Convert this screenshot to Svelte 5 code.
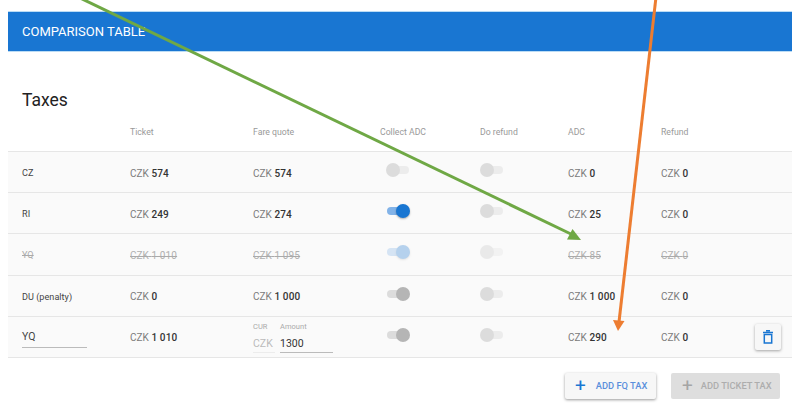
<script>
    const rows = [
        { code: "CZ", ticket: "574", fare: "574", collect: "off", refund: "off", adc: "0", ref: "0" },
        { code: "RI", ticket: "249", fare: "274", collect: "on", refund: "off", adc: "25", ref: "0" },
        { code: "YQ", ticket: "1 010", fare: "1 095", collect: "on", refund: "off", adc: "85", ref: "0", struck: true },
        { code: "DU (penalty)", ticket: "0", fare: "1 000", collect: "dark", refund: "off", adc: "1 000", ref: "0" },
        { code: "YQ", ticket: "1 010", collect: "dark", refund: "off", adc: "290", ref: "0", custom: true }
    ];
</script>

<main class="page">
    <header class="bar">COMPARISON TABLE</header>
    <h2>Taxes</h2>

    <div class="row head">
        <span></span>
        <span>Ticket</span>
        <span>Fare quote</span>
        <span>Collect ADC</span>
        <span>Do refund</span>
        <span>ADC</span>
        <span>Refund</span>
    </div>

    <div class="rows">
        {#each rows as r}
            <div class="row body" class:struck={r.struck}>
                {#if r.custom}
                    <span class="code-input">{r.code}</span>
                {:else}
                    <span class="code">{r.code}</span>
                {/if}
                <span class="money"><i>CZK</i> <b>{r.ticket}</b></span>
                {#if r.custom}
                    <div class="fq">
                        <div class="fq-field cur"><small>CUR</small><span>CZK</span></div>
                        <div class="fq-field amt"><small>Amount</small><span>1300</span></div>
                    </div>
                {:else}
                    <span class="money"><i>CZK</i> <b>{r.fare}</b></span>
                {/if}
                <div class="toggle {r.collect}"><em></em><u></u></div>
                <div class="toggle {r.refund} second"><em></em><u></u></div>
                <span class="money"><i>CZK</i> <b>{r.adc}</b></span>
                <span class="money"><i>CZK</i> <b>{r.ref}</b></span>
                {#if r.custom}
                    <button class="trash" aria-label="Delete">
                        <svg width="10" height="14" viewBox="0 0 10 14">
                            <path d="M3 .8h4M0 2.500h10" stroke="#1976d2" stroke-width="1.500" fill="none" />
                            <path d="M1.300 4.600h7.400v8.500H1.300z" stroke="#1976d2" stroke-width="1.500" fill="none" />
                        </svg>
                    </button>
                {/if}
            </div>
        {/each}
    </div>

    <div class="actions">
        <button class="btn primary"><span class="plus">+</span>ADD FQ TAX</button>
        <button class="btn disabled"><span class="plus">+</span>ADD TICKET TAX</button>
    </div>

    <svg class="arrows" width="792" height="407" viewBox="0 0 792 407">
        <line x1="78" y1="-3" x2="573" y2="235" stroke="#6fa845" stroke-width="3" />
        <polygon points="581,240 567,239.500 572.500,229" fill="#6fa845" />
        <line x1="656" y1="-3" x2="619" y2="322" stroke="#ed7d31" stroke-width="3" />
        <polygon points="618,331 613,320 624.500,321" fill="#ed7d31" />
    </svg>
</main>

<style>
    :global(body) {
        margin: 0;
        background: #fff;
    }

    .page {
        position: relative;
        width: 792px;
        height: 407px;
        overflow: hidden;
        padding: 12px 0 0 8px;
        box-sizing: border-box;
        font-family: Roboto, "Liberation Sans", sans-serif;
        color: #333;
    }

    .bar {
        height: 39px;
        line-height: 40px;
        padding-left: 14px;
        background: #1976d2;
        border-top: 1px solid #bbdcf5;
        border-bottom: 1px solid #bbdcf5;
        margin-top: -1px;
        color: #fff;
        font-size: 13px;
        font-weight: 400;
    }

    h2 {
        margin: 37px 0 0;
        padding-left: 14px;
        height: 22px;
        line-height: 22px;
        font-size: 17.500px;
        font-weight: 400;
        color: #222;
    }

    .row {
        display: grid;
        grid-template-columns: 122px 123px 127px 100px 88px 93px 1fr;
        align-items: center;
        position: relative;
    }

    .head {
        height: 40px;
        font-size: 8.700px;
        color: #999;
        padding-top: 2px;
        box-sizing: border-box;
    }

    .head > :first-child,
    .code {
        padding-left: 14px;
    }

    .code {
        font-size: 9.100px;
        color: #444;
    }

    .rows {
        border-bottom: 1px solid #e6e6e6;
    }

    .body {
        height: 41.200px;
        box-sizing: border-box;
        background: #fafafa;
        border-top: 1px solid #e6e6e6;
        padding-top: 2px;
        font-size: 10px;
        letter-spacing: 0.03px;
    }

    .money i {
        font-style: normal;
        color: #7a7a7a;
    }

    .money b {
        font-weight: 500;
        color: #333;
        letter-spacing: 0.15px;
    }

    .struck > span {
        text-decoration: line-through;
        color: #aaa;
    }

    .struck .money i,
    .struck .money b {
        color: #b0b0b0;
        font-weight: 400;
    }

    .code-input {
        width: 65px;
        margin-left: 14px;
        padding-bottom: 4px;
        border-bottom: 1px solid #bbb;
        margin-top: 3px;
        font-size: 10.500px;
        color: #444;
    }

    .fq {
        display: flex;
        gap: 5px;
        margin-top: -2px;
    }

    .fq-field {
        display: flex;
        flex-direction: column;
    }

    .fq-field small {
        font-size: 7.500px;
        color: #aaa;
        height: 12px;
        line-height: 12px;
        margin-bottom: 3px;
    }

    .fq-field span {
        font-size: 10.500px;
        line-height: 15px;
        padding-bottom: 1px;
    }

    .cur {
        width: 22px;
        color: #bbb;
    }

    .cur span {
        border-bottom: 1px solid #ececec;
    }

    .amt {
        width: 53px;
    }

    .amt span {
        color: #333;
        border-bottom: 1px solid #bbb;
    }

    .toggle {
        position: relative;
        width: 22px;
        height: 8px;
        margin: -6px 0 0 7px;
    }

    .toggle.second {
        margin-left: 1px;
    }

    .toggle em {
        position: absolute;
        inset: 0;
        border-radius: 4px;
        background: #ececec;
    }

    .toggle u {
        position: absolute;
        left: -1px;
        top: -3px;
        width: 14px;
        height: 14px;
        border-radius: 50%;
        background: #dcdcdc;
    }

    .toggle.on em {
        background: #82b3e8;
    }

    .toggle.on u {
        left: 9px;
        background: #1976d2;
        box-shadow: 0 1px 2px rgba(0, 0, 0, 0.3);
    }

    .toggle.dark em {
        background: #dcdcdc;
    }

    .toggle.dark u {
        left: 9px;
        background: #b5b5b5;
    }

    .struck .toggle {
        opacity: 0.3;
    }

    .struck .toggle.off {
        opacity: 0.55;
    }

    .trash {
        position: absolute;
        right: 11px;
        top: 7px;
        width: 26px;
        height: 26px;
        padding: 0;
        border: 0;
        border-radius: 2px;
        background: #f7f7f7;
        box-shadow: 0 1px 3px rgba(0, 0, 0, 0.35);
        display: flex;
        align-items: center;
        justify-content: center;
    }

    .actions {
        display: flex;
        justify-content: flex-end;
        gap: 15px;
        padding: 15px 12px 0 0;
    }

    .btn {
        height: 26px;
        padding: 0;
        border: 0;
        border-radius: 2px;
        display: flex;
        align-items: center;
        font: 500 9.300px Roboto, "Liberation Sans", sans-serif;
    }

    .plus {
        font-size: 19px;
        font-weight: 400;
        line-height: 1;
        margin-right: 8px;
    }

    .primary {
        width: 91px;
        padding-left: 10px;
        background: #f7f7f7;
        color: #5b8fdc;
        box-shadow: 0 1px 3px rgba(0, 0, 0, 0.4);
    }

    .primary .plus {
        color: #1976d2;
        margin-right: 10px;
    }

    .disabled {
        width: 109px;
        padding-left: 11px;
        background: #dedede;
        color: #adadad;
    }

    .disabled .plus {
        color: #a5a5a5;
    }

    .arrows {
        position: absolute;
        left: 0;
        top: 0;
        pointer-events: none;
    }
</style>
